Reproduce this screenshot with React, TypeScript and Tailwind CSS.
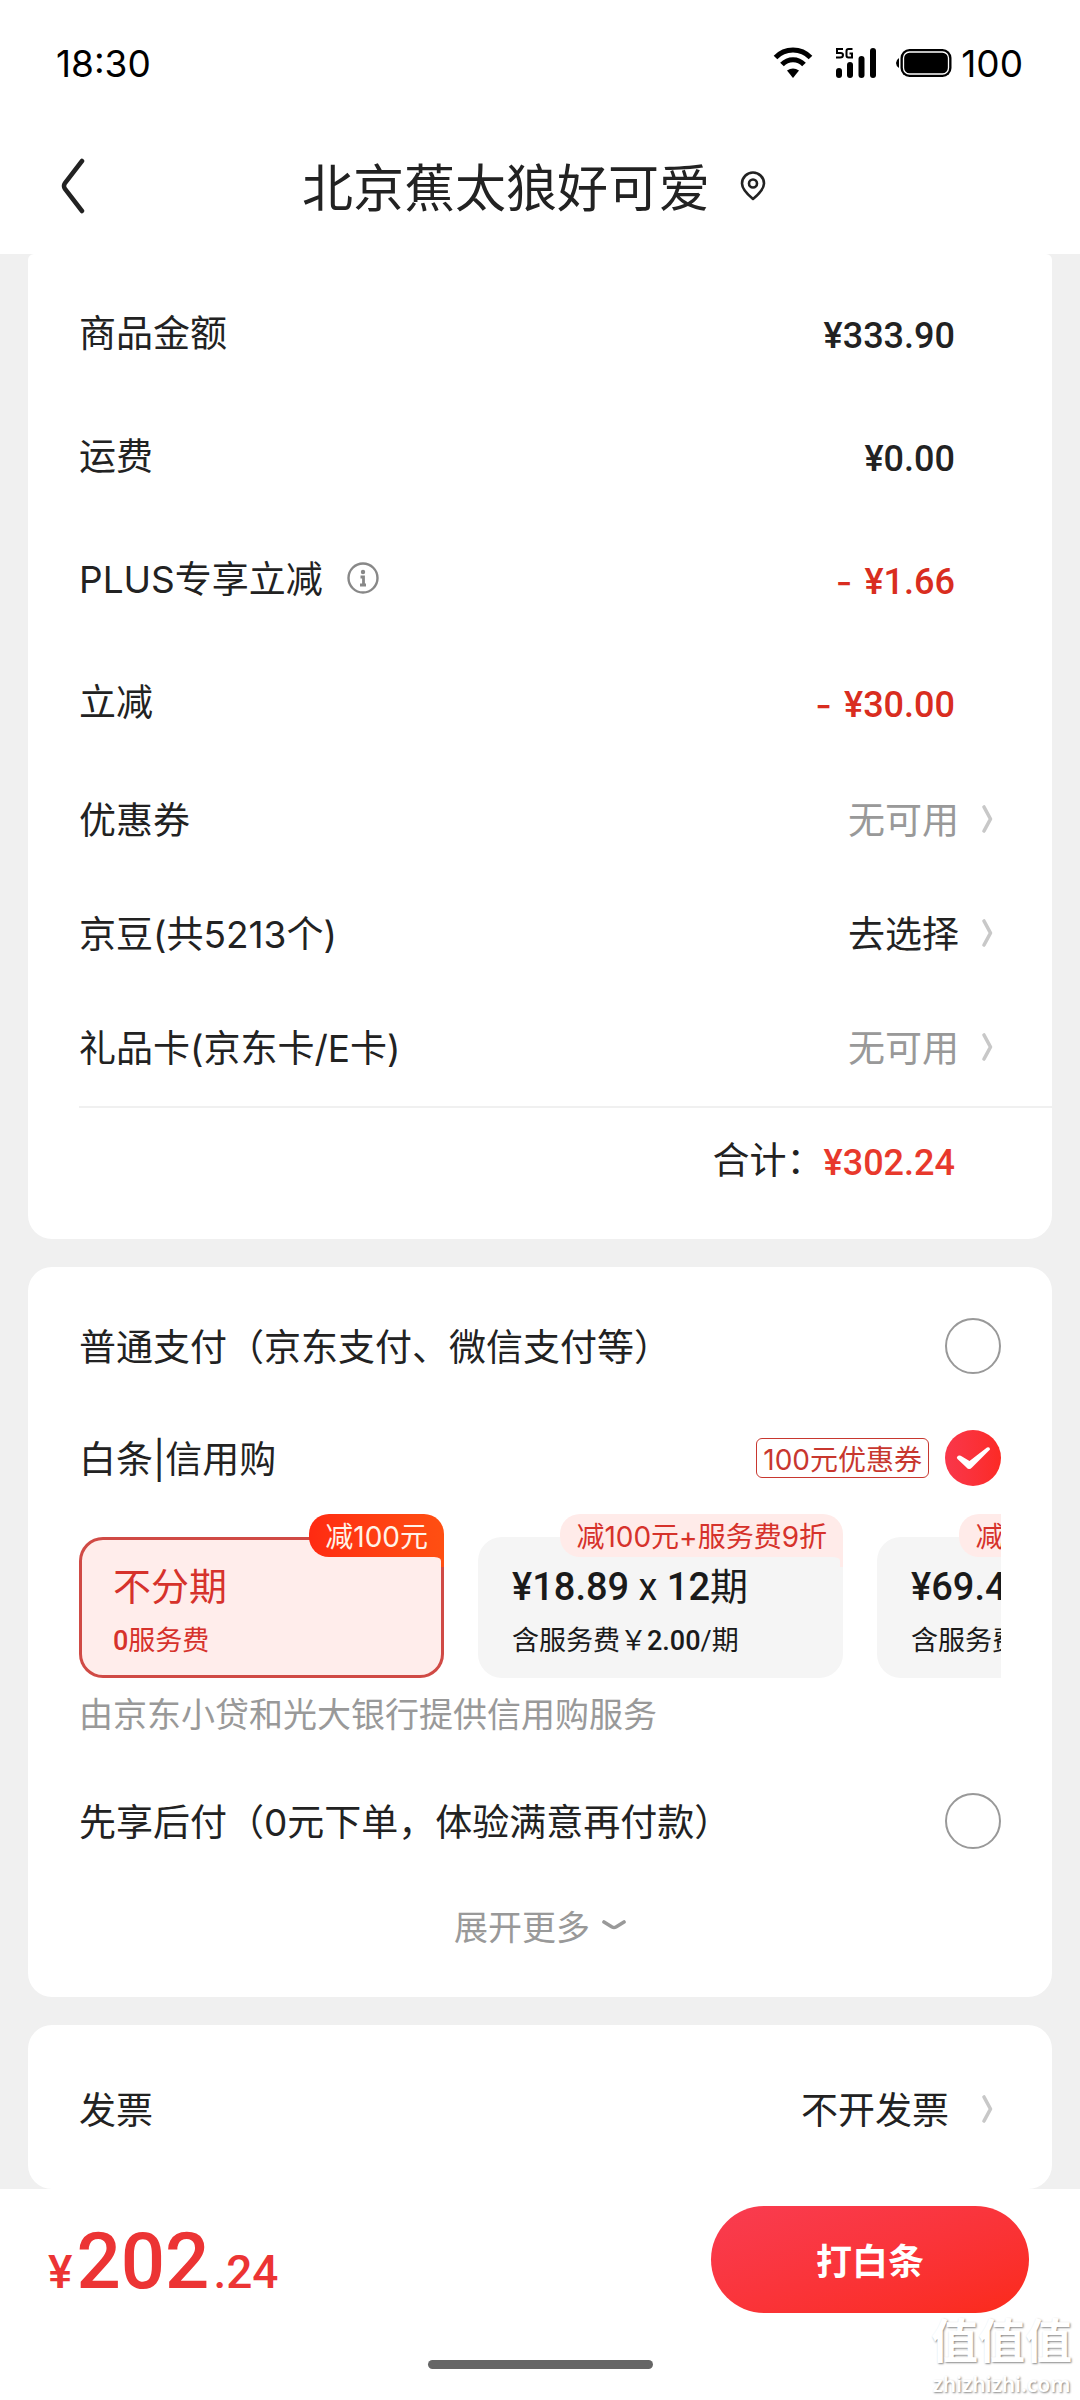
import { useState } from "react"
import type { ReactNode } from "react"

interface AmountRow {
  label: string
  value: string
  discount?: boolean
  info?: boolean
}

interface LinkRow {
  label: string
  value: string
  muted?: boolean
}

const amounts: AmountRow[] = [
  { label: "商品金额", value: "¥333.90" },
  { label: "运费", value: "¥0.00" },
  { label: "PLUS专享立减", value: "¥1.66", discount: true, info: true },
  { label: "立减", value: "¥30.00", discount: true },
]

const assets: LinkRow[] = [
  { label: "优惠券", value: "无可用", muted: true },
  { label: "京豆(共5213个)", value: "去选择" },
  { label: "礼品卡(京东卡/E卡)", value: "无可用", muted: true },
]

function ChevronRight() {
  return (
    <svg className="mb-1 h-[30px] w-[14px]" viewBox="0 0 14 30" fill="none" aria-hidden="true">
      <path d="M3 3 L9.500 15 L3 27" stroke="#c8c8c8" strokeWidth="3.600" strokeLinecap="round" strokeLinejoin="round" />
    </svg>
  )
}

function StatusBar() {
  return (
    <div className="flex h-[118px] items-center justify-between pt-2 pl-14 pr-[57px] font-['Inter',sans-serif] text-[37px] leading-none text-black">
      <span>18:30</span>
      <div className="flex items-center">
        <svg className="h-[32px] w-[40px]" viewBox="0 0 40 32" fill="none" aria-label="Wi-Fi">
          <path d="M2.5 10.5 C12 0.5 28 0.5 37.5 10.5" stroke="#000" strokeWidth="5" />
          <path d="M9 17.5 C15 11 25 11 31 17.5" stroke="#000" strokeWidth="5" />
          <path d="M14 23.5 Q20 19.5 26 23.5 L20 31 Z" fill="#000" />
        </svg>
        <svg className="ml-[22px] h-[32px] w-[42px]" viewBox="0 0 42 32" aria-label="5G">
          <path
            d="M8 2H2V6H5.5Q8 6 8 8Q8 10.5 5 10.5H1 M17.5 2H13.5Q11.5 2 11.5 4V8.5Q11.5 10.5 13.5 10.5H17V6.5H14.5"
            fill="none"
            stroke="#000"
            strokeWidth="2"
          />
          <rect x="1" y="21" width="6" height="10" rx="3" />
          <rect x="12" y="15" width="6" height="16" rx="3" />
          <rect x="23.500" y="9" width="6" height="22" rx="3" />
          <rect x="35" y="1" width="6" height="30" rx="3" />
        </svg>
        <svg className="ml-[18px] h-[30px] w-[58px]" viewBox="0 0 58 30" aria-label="电量">
          <path d="M4 10 Q1 12 1 15 Q1 18 4 20 Z" />
          <rect x="5.500" y="1" width="51" height="28" rx="9" />
          <rect x="8.500" y="4" width="45" height="22" rx="6" fill="none" stroke="#fff" strokeWidth="1.300" />
        </svg>
        <span className="ml-2">100</span>
      </div>
    </div>
  )
}

function Header() {
  return (
    <header className="grid h-[136px] grid-cols-[96px_1fr_108px] items-center">
      <button type="button" aria-label="返回" className="pl-[58px]">
        <svg className="h-[56px] w-[30px]" viewBox="0 0 30 56" fill="none">
          <path d="M24 3 L7 25 Q5 28 7 31 L24 53" stroke="#222" strokeWidth="4.500" strokeLinecap="round" />
        </svg>
      </button>
      <div className="flex items-center justify-center gap-[30px]">
        <h1 className="pt-1 text-[51px] leading-none">北京蕉太狼好可爱</h1>
        <svg className="h-[30px] w-[26px]" viewBox="0 0 26 30" fill="none" stroke="#222" strokeWidth="2.600">
          <path d="M13 28 C7 23 2 18 2 12.500 A11 11 0 0 1 24 12.500 C24 18 19 23 13 28 Z" strokeLinejoin="round" />
          <circle cx="13" cy="12.500" r="4" />
        </svg>
      </div>
    </header>
  )
}

interface PayRowProps {
  id: string
  label: string
  selected: string
  onSelect: (id: string) => void
  children?: ReactNode
}

function PayRow({ id, label, selected, onSelect, children }: PayRowProps) {
  const checked = selected === id
  return (
    <label className="flex h-[112px] items-center justify-between text-[37px]">
      <span className="pt-1">{label}</span>
      <span className="flex items-center gap-4">
        {children}
        <span className="grid place-items-center">
          <input
            type="radio"
            name="payment"
            checked={checked}
            onChange={() => onSelect(id)}
            className="col-start-1 row-start-1 h-14 w-14 appearance-none rounded-full border-2 border-[#999] checked:border-0 checked:bg-linear-to-r checked:from-[#f9374a] checked:to-[#fc2a24]"
          />
          {checked && (
            <svg className="pointer-events-none col-start-1 row-start-1 h-14 w-14" viewBox="0 0 56 56" fill="#fff">
              <path d="M12 27 Q14 24.500 17 26.500 L24.500 31 L42 17.500 Q45 16.500 45 19.500 L27 37.500 Q24 40.500 21.500 37.500 L12.500 29 Q11.500 28 12 27 Z" />
            </svg>
          )}
        </span>
      </span>
    </label>
  )
}

interface PlanProps {
  badge: string
  active?: boolean
  title: ReactNode
  fee: ReactNode
}

function Plan({ badge, active, title, fee }: PlanProps) {
  return (
    <button
      type="button"
      className={`relative flex h-[141px] w-[365px] shrink-0 flex-col items-start justify-center gap-[22px] rounded-3xl pt-2 pl-[34px] text-left font-['Roboto','Noto_Sans_CJK_SC',sans-serif] whitespace-nowrap ${
        active ? "bg-[#ffedeb] text-[#d6322b] ring-[3px] ring-[#d04a45] ring-inset" : "bg-[#f5f5f5] text-[#1a1a1a]"
      }`}
    >
      <span
        className={`absolute -top-[23px] right-0 flex h-[43px] items-center rounded-t-[20px] rounded-bl-[20px] px-[16px] pt-[3px] font-['Inter','Noto_Sans_CJK_SC',sans-serif] text-[28px] leading-none ${
          active ? "bg-linear-to-r from-[#ff2a12] to-[#ff4f12] text-[#fff3e8]" : "bg-[#ffebe9] text-[#d6322b]"
        }`}
      >
        {badge}
        <svg
          className={`absolute top-full right-0 h-[10px] w-[12px] ${active ? "fill-[#ff4f12]" : "fill-[#ffebe9]"}`}
          viewBox="0 0 12 10"
        >
          <path d="M0 0 H12 V10 H9 V4 C9 1 6 0 0 0 Z" />
        </svg>
      </span>
      <span className="text-[38px] leading-none">{title}</span>
      <span className="text-[27px] leading-none">{fee}</span>
    </button>
  )
}

export default function App() {
  const [payment, setPayment] = useState("baitiao")

  return (
    <div className="flex min-h-screen flex-col bg-[#f0f0f0] font-['Inter','Noto_Sans_CJK_SC',sans-serif] text-[#222]">
      <div className="bg-white">
        <StatusBar />
        <Header />
      </div>

      <main className="flex grow flex-col gap-7 px-7">
        <section className="rounded-t-md rounded-b-3xl bg-white pt-[18px] pb-[26px] pl-[51px]">
          {amounts.map((row) => (
            <div key={row.label} className="flex h-[123px] items-center justify-between pr-[97px]">
              <div className="flex items-center gap-6 text-[37px]">
                <span>{row.label}</span>
                {row.info && (
                  <svg className="mb-1 h-[32px] w-[32px]" viewBox="0 0 32 32" fill="none" stroke="#888">
                    <circle cx="16" cy="16" r="14.500" strokeWidth="2.400" />
                    <circle cx="16" cy="10" r="2.200" fill="#888" stroke="none" />
                    <path d="M13.500 15H16.500V23 M13 23H19" strokeWidth="2.800" />
                  </svg>
                )}
              </div>
              <span
                className={`flex items-center gap-3 pt-1 font-['Roboto',sans-serif] text-[36px] font-medium ${
                  row.discount ? "text-[#d92d20]" : ""
                }`}
              >
                {row.discount && <span className="font-['Inter',sans-serif]">-</span>}
                <span>{row.value}</span>
              </span>
            </div>
          ))}
          {assets.map((row) => (
            <a key={row.label} href="#" className="flex h-[114px] items-center justify-between pr-[57px] text-[37px]">
              <span>{row.label}</span>
              <span className="flex items-center gap-[22px]">
                <span className={row.muted ? "text-[#999]" : ""}>{row.value}</span>
                <ChevronRight />
              </span>
            </a>
          ))}
          <div className="flex h-[107px] items-center justify-end border-t-2 border-[#f0f0f0] pr-[97px]">
            <span className="text-[37px]">合计：</span>
            <span className="pt-1 font-['Roboto',sans-serif] text-[36px] font-medium text-[#e8392c]">¥302.24</span>
          </div>
        </section>

        <section className="rounded-3xl bg-white pt-[23px] pr-[51px] pb-5 pl-[51px]">
          <PayRow id="normal" label="普通支付（京东支付、微信支付等）" selected={payment} onSelect={setPayment} />
          <PayRow id="baitiao" label="白条|信用购" selected={payment} onSelect={setPayment}>
            <span className="flex h-10 items-center rounded-md border border-[#c8372f] px-[6px] pt-[3px] text-[28px] leading-none text-[#c8372f]">
              100元优惠券
            </span>
          </PayRow>
          <div className="flex gap-[34px] overflow-hidden pt-[23px]">
            <Plan
              active
              badge="减100元"
              title="不分期"
              fee={
                <>
                  <b className="font-medium">0</b>服务费
                </>
              }
            />
            <Plan
              badge="减100元+服务费9折"
              title={
                <>
                  <b className="font-medium">¥18.89</b> x <b className="font-medium">12</b>期
                </>
              }
              fee={
                <>
                  含服务费￥<b className="font-medium">2.00</b>/期
                </>
              }
            />
            <Plan
              badge="减100元+服务费9折"
              title={
                <>
                  <b className="font-medium">¥69.44</b> x <b className="font-medium">3</b>期
                </>
              }
              fee={
                <>
                  含服务费￥<b className="font-medium">2.00</b>/期
                </>
              }
            />
          </div>
          <p className="flex h-[72px] items-center text-[34px] text-[#999]">由京东小贷和光大银行提供信用购服务</p>
          <div className="mt-[15px]">
            <PayRow id="later" label="先享后付（0元下单，体验满意再付款）" selected={payment} onSelect={setPayment} />
          </div>
          <button type="button" className="flex h-[100px] w-full items-center justify-center gap-3 text-[34px] text-[#999]">
            展开更多
            <svg className="mb-1 h-[12px] w-[24px]" viewBox="0 0 24 12" fill="none">
              <path d="M2 3 L10 8 Q12 9 14 8 L22 3" stroke="#999" strokeWidth="3.600" strokeLinecap="round" />
            </svg>
          </button>
        </section>

        <section className="rounded-3xl bg-white">
          <a href="#" className="flex h-[164px] items-center justify-between pt-2 pr-[57px] pl-[51px] text-[37px]">
            <span>发票</span>
            <span className="flex items-center gap-8">
              不开发票
              <ChevronRight />
            </span>
          </a>
        </section>
      </main>

      <footer className="relative bg-white pt-[17px] pb-[31px]">
        <div className="flex items-center justify-between pr-[51px] pl-12">
          <p className="flex items-baseline gap-1 pt-1 font-['Roboto',sans-serif] font-medium text-[#ec3434]">
            <span className="text-[46px] leading-none">¥</span>
            <span className="text-[78px] leading-none">202</span>
            <span className="text-[46px] leading-none">.24</span>
          </p>
          <button
            type="button"
            className="h-[107px] w-[318px] rounded-full bg-linear-to-br from-[#f93c50] to-[#fb2a18] pt-1 text-[36px] font-bold text-white"
          >
            打白条
          </button>
        </div>
        <div className="mx-auto mt-[47px] h-[9px] w-[225px] rounded-full bg-[#666]" />
        <div className="pointer-events-none absolute right-2 bottom-0 flex flex-col items-center font-['Noto_Sans','Noto_Sans_CJK_SC',sans-serif] text-white [text-shadow:1px_1px_2px_#888]">
          <span className="text-[47px] leading-[56px] font-bold">值值值</span>
          <span className="text-[21px] leading-[32px] font-semibold">zhizhizhi.com</span>
        </div>
      </footer>
    </div>
  )
}
